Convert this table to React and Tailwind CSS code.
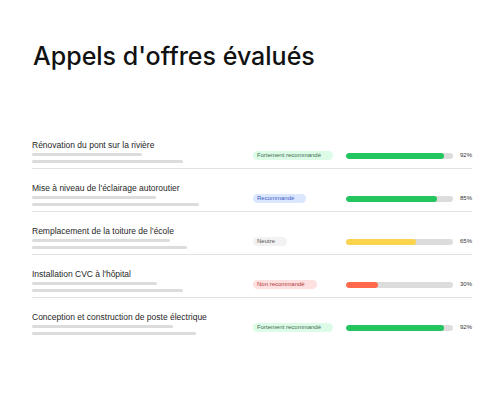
import React from 'react'

const rows = [
  { title: 'Rénovation du pont sur la rivière', l1: 110, l2: 151, badge: 'Fortement recommandé', tone: 'green', pct: 92, bar: 'bg-[#22c55e]' },
  { title: "Mise à niveau de l'éclairage autoroutier", l1: 124, l2: 167, badge: 'Recommandé', tone: 'blue', pct: 85, bar: 'bg-[#22c55e]' },
  { title: "Remplacement de la toiture de l'école", l1: 138, l2: 155, badge: 'Neutre', tone: 'gray', pct: 65, bar: 'bg-[#fcd34d]' },
  { title: "Installation CVC à l'hôpital", l1: 125, l2: 151, badge: 'Non recommandé', tone: 'red', pct: 30, bar: 'bg-[#ff6a4d]' },
  { title: 'Conception et construction de poste électrique', l1: 141, l2: 164, badge: 'Fortement recommandé', tone: 'green', pct: 92, bar: 'bg-[#22c55e]' },
]

const tones = {
  green: 'bg-[#dcfce7] text-[#3f6b4f]',
  blue: 'bg-[#dbe7fe] text-[#3b5bc4]',
  gray: 'bg-[#f2f2f2] text-[#555]',
  red: 'bg-[#fde0e0] text-[#b33a3a]',
}

function Row({ row, last }) {
  return (
    <div className={`flex pt-[13px] pb-[5px] ${last ? '' : 'border-b border-[#e2e2e2]'}`}>
      <div className="w-[222px] flex flex-col">
        <div className="font-['Liberation_Sans',sans-serif] text-[8.5px] leading-[12px] text-[#1f1f1f]">{row.title}</div>
        <div className="mt-[2px] h-[3px] rounded-full bg-[#dcdcdc]" style={{ width: row.l1 }} />
        <div className="mt-[4px] h-[3px] rounded-full bg-[#dcdcdc]" style={{ width: row.l2 }} />
      </div>
      <div className="flex items-center self-end mb-[3px] h-[9px] font-['Liberation_Sans',sans-serif]">
        <div className="w-[93px] flex items-center">
          <span className={`flex items-center rounded-full pl-[4px] pr-[12px] h-[9px] text-[6px] ${tones[row.tone]}`}>
            {row.badge}
          </span>
        </div>
        <div className="w-[107px] h-[6px] rounded-full bg-[#dcdcdc] overflow-hidden">
          <div className={`h-full rounded-full ${row.bar}`} style={{ width: `${row.pct}%` }} />
        </div>
        <div className="ml-[7px] text-[6px] text-[#333]">{row.pct}%</div>
      </div>
    </div>
  )
}

export default function App() {
  return (
    <div className="w-[500px] h-[400px] bg-white font-['Inter',sans-serif]">
      <div className="pl-[33px] pt-[40px]">
        <h1 className="text-[25px] leading-[32px] font-medium text-[#111]">Appels d'offres évalués</h1>
      </div>
      <div className="ml-[32px] w-[440px] mt-[54px]">
        {rows.map((r, i) => (
          <Row key={i} row={r} last={i === rows.length - 1} />
        ))}
      </div>
    </div>
  )
}
